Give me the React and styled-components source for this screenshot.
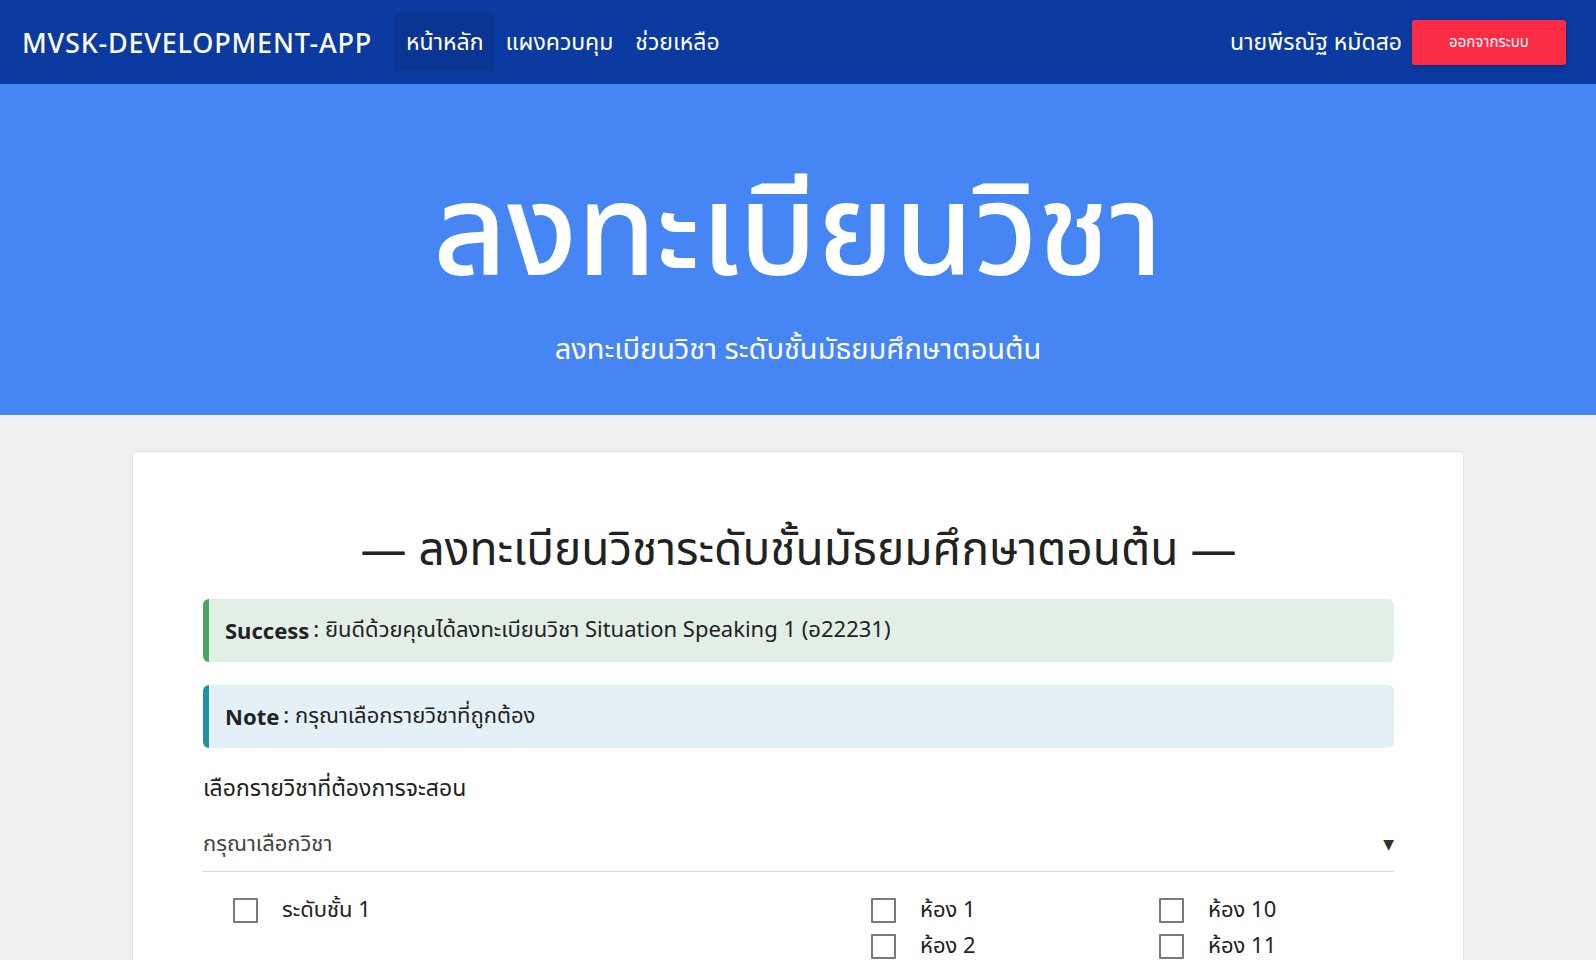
import styled, { createGlobalStyle } from 'styled-components';

const GlobalStyle = createGlobalStyle`
  body {
    margin: 0;
    background: #f0f0f2;
    font-family: "Noto Sans", "Noto Sans Thai", "DejaVu Sans", sans-serif;
    color: #222;
  }
`;

const Navbar = styled.nav`
  height: 84px;
  background: #0b3aa0;
  display: flex;
  align-items: center;
  padding: 0 30px 0 22px;
  color: #fff;
`;
const Brand = styled.div`
  font-size: 27px;
  font-weight: 500;
  letter-spacing: 0.8px;
  margin-right: 23px;
`;
const NavLinks = styled.div`
  display: flex;
  align-items: center;
  flex: 1;
`;
const NavLink = styled.a`
  font-size: 23px;
  color: #fff;
  padding: 0 11px;
  height: 58px;
  display: flex;
  align-items: center;
  background: ${(p) => (p.$active ? '#0a3592' : 'transparent')};
`;
const UserName = styled.span`
  font-size: 23px;
  margin-right: 10px;
`;
const LogoutButton = styled.button`
  width: 154px;
  height: 45px;
  border: none;
  border-radius: 3px;
  background: #fc2c46;
  color: #fff;
  font-family: inherit;
  font-size: 15px;
  box-shadow: 0 2px 4px rgba(0, 0, 0, 0.25);
`;

const Hero = styled.header`
  height: 331px;
  background: #4586f4;
  color: #fff;
  display: flex;
  flex-direction: column;
  align-items: center;
`;
const HeroTitle = styled.h1`
  margin: 65px 0 0;
  font-size: 128px;
  font-weight: 500;
  line-height: 1.2;
`;
const HeroSub = styled.p`
  margin: 25px 0 0;
  font-size: 29px;
`;

const Card = styled.main`
  width: 1332px;
  margin: 36px auto 0;
  background: #fff;
  border: 1px solid #e2e2e6;
  border-radius: 4px;
  box-sizing: border-box;
  padding: 66px 69px 40px 70px;
`;
const CardTitle = styled.h2`
  margin: 0 0 21px;
  text-align: center;
  font-size: 46px;
  font-weight: 400;
  line-height: 1.3;
  color: #222;
`;
const Alert = styled.div`
  height: 63px;
  display: flex;
  align-items: center;
  padding-left: 16px;
  border-left: 6px solid ${(p) => p.$border};
  background: ${(p) => p.$bg};
  border-radius: 6px;
  font-size: 22px;
  margin-bottom: 23px;
  b {
    font-weight: 700;
    margin-right: 4px;
  }
`;
const Label = styled.div`
  font-size: 23px;
  margin-top: 23px;
`;
const Select = styled.div`
  display: flex;
  justify-content: space-between;
  align-items: center;
  height: 54px;
  border-bottom: 1px solid #d9d9d9;
  font-size: 22px;
  color: #444;
  margin-top: 11px;
  span:last-child {
    font-size: 14px;
    color: #333;
  }
`;
const CheckGrid = styled.div`
  display: grid;
  grid-template-columns: 638px 288px 1fr;
  padding-left: 30px;
  margin-top: 26px;
`;
const CheckCol = styled.div`
  display: flex;
  flex-direction: column;
  gap: 11px;
`;
const CheckRow = styled.label`
  display: flex;
  align-items: center;
  gap: 24px;
  font-size: 22px;
  height: 25px;
`;
const Box = styled.span`
  width: 25px;
  height: 25px;
  box-sizing: border-box;
  border: 2px solid #7a7a7a;
  border-radius: 1px;
`;

export default function App() {
  return (
    <>
      <GlobalStyle />
      <Navbar>
        <Brand>MVSK-DEVELOPMENT-APP</Brand>
        <NavLinks>
          <NavLink $active>หน้าหลัก</NavLink>
          <NavLink>แผงควบคุม</NavLink>
          <NavLink>ช่วยเหลือ</NavLink>
        </NavLinks>
        <UserName>นายพีรณัฐ หมัดสอ</UserName>
        <LogoutButton>ออกจากระบบ</LogoutButton>
      </Navbar>
      <Hero>
        <HeroTitle>ลงทะเบียนวิชา</HeroTitle>
        <HeroSub>ลงทะเบียนวิชา ระดับชั้นมัธยมศึกษาตอนต้น</HeroSub>
      </Hero>
      <Card>
        <CardTitle>— ลงทะเบียนวิชาระดับชั้นมัธยมศึกษาตอนต้น —</CardTitle>
        <Alert $border="#4aa463" $bg="#e2efe6">
          <b>Success</b>: ยินดีด้วยคุณได้ลงทะเบียนวิชา Situation Speaking 1 (อ22231)
        </Alert>
        <Alert $border="#2192a2" $bg="#e3f0f5">
          <b>Note</b>: กรุณาเลือกรายวิชาที่ถูกต้อง
        </Alert>
        <Label>เลือกรายวิชาที่ต้องการจะสอน</Label>
        <Select>
          <span>กรุณาเลือกวิชา</span>
          <span>▼</span>
        </Select>
        <CheckGrid>
          <CheckCol>
            <CheckRow><Box />ระดับชั้น 1</CheckRow>
          </CheckCol>
          <CheckCol>
            <CheckRow><Box />ห้อง 1</CheckRow>
            <CheckRow><Box />ห้อง 2</CheckRow>
          </CheckCol>
          <CheckCol>
            <CheckRow><Box />ห้อง 10</CheckRow>
            <CheckRow><Box />ห้อง 11</CheckRow>
          </CheckCol>
        </CheckGrid>
      </Card>
    </>
  );
}
